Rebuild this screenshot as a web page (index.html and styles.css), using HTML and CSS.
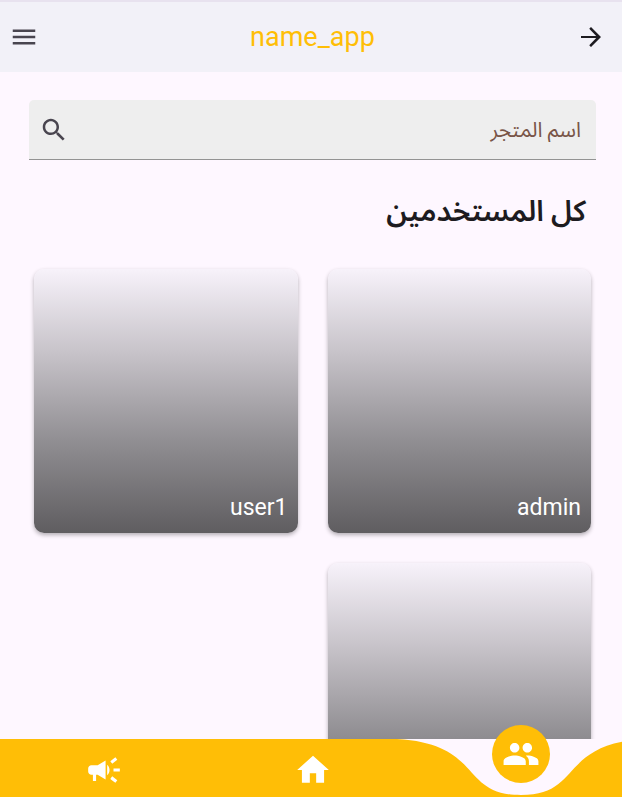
FILE: index.html
```html
<!DOCTYPE html>
<html lang="ar" dir="rtl">
<head>
<meta charset="utf-8">
<meta name="viewport" content="width=device-width, initial-scale=1">
<title>name_app</title>
<link rel="stylesheet" href="styles.css">
</head>
<body>
<header class="app-bar">
  <button class="icon-button" type="button" aria-label="رجوع">
    <svg class="icon" viewBox="0 0 24 24"><path d="M12 4l-1.41 1.41L16.17 11.2H4v1.6h12.17l-5.58 5.79L12 20l8-8z"/></svg>
  </button>
  <h1 class="app-title">name_app</h1>
  <button class="icon-button menu" type="button" aria-label="القائمة">
    <svg class="icon" viewBox="0 0 24 24"><path d="M3 18h18v-2H3v2zm0-5h18v-2H3v2zm0-7v2h18V6H3z"/></svg>
  </button>
</header>
<main class="content">
  <div class="search">
    <input class="search-input" type="search" placeholder="اسم المتجر" aria-label="اسم المتجر">
    <svg class="icon search-icon" viewBox="0 0 24 24"><path d="M15.5 14h-.79l-.28-.27C15.41 12.59 16 11.11 16 9.5 16 5.91 13.09 3 9.5 3S3 5.91 3 9.5 5.91 16 9.5 16c1.61 0 3.09-.59 4.23-1.57l.27.28v.79l5 4.99L20.49 19l-4.99-5zm-6 0C7.01 14 5 11.99 5 9.5S7.01 5 9.5 5 14 7.01 14 9.5 11.99 14 9.5 14z"/></svg>
  </div>
  <h2 class="section-title">كل المستخدمين</h2>
  <div class="grid">
    <a class="card" href="#admin">admin</a>
    <a class="card" href="#user1">user1</a>
    <a class="card" href="#user2" aria-label="user2"></a>
  </div>
</main>
<nav class="bottom-nav">
  <svg class="nav-shape" viewBox="0 0 625 58" preserveAspectRatio="none" aria-hidden="true"><path d="M0 0H397C484 5 459 56 521 56S558 5 645 0V58H0z"/></svg>
  <a class="nav-item active" href="#users" aria-label="المستخدمون">
    <svg class="nav-icon" viewBox="0 0 24 24"><path d="M16 11c1.66 0 2.99-1.34 2.99-3S17.66 5 16 5c-1.66 0-3 1.34-3 3s1.34 3 3 3zm-8 0c1.66 0 2.99-1.34 2.99-3S9.66 5 8 5C6.34 5 5 6.34 5 8s1.34 3 3 3zm0 2c-2.33 0-7 1.17-7 3.5V19h14v-2.5c0-2.33-4.67-3.5-7-3.5zm8 0c-.29 0-.62.02-.97.05 1.16.84 1.97 1.97 1.97 3.45V19h6v-2.5c0-2.33-4.67-3.5-7-3.5z"/></svg>
  </a>
  <a class="nav-item" href="#home" aria-label="الرئيسية">
    <svg class="nav-icon" viewBox="0 0 24 24"><path d="M10 20v-6h4v6h5v-8h3L12 3 2 12h3v8z"/></svg>
  </a>
  <a class="nav-item" href="#campaigns" aria-label="الإعلانات">
    <svg class="nav-icon" viewBox="0 0 24 24"><path d="M18 11v2h4v-2h-4zm-2 6.61c.96.71 2.21 1.65 3.2 2.39.4-.53.8-1.07 1.2-1.6-.99-.74-2.24-1.68-3.2-2.4-.4.54-.8 1.08-1.2 1.61zM20.4 5.6c-.4-.53-.8-1.07-1.2-1.6-.99.74-2.24 1.68-3.2 2.4.4.53.8 1.07 1.2 1.6.96-.72 2.21-1.65 3.2-2.4zM4 9c-1.1 0-2 .9-2 2v2c0 1.1.9 2 2 2h1v4h2v-4h1l5 3V6L8 9H4zm11.5 3c0-1.33-.58-2.53-1.5-3.35v6.69c.92-.81 1.5-2.01 1.5-3.34z"/></svg>
  </a>
</nav>
</body>
</html>
```

FILE: styles.css
```css
* {
  box-sizing: border-box;
}

body {
  margin: 0;
  height: 100vh;
  display: flex;
  flex-direction: column;
  overflow: hidden;
  background: #fef7ff;
  color: #1d1b20;
  font-family: Roboto, "Noto Sans Arabic", "Noto Sans", sans-serif;
}

.app-bar {
  flex: none;
  height: 72px;
  display: grid;
  grid-template-columns: 40px 1fr 40px;
  align-items: center;
  padding-inline: 6px 9px;
  border-top: 2px solid #e8e2ef;
  background: #f2f1f8;
}

.icon-button {
  display: flex;
  justify-content: flex-end;
  padding: 0;
  border: 0;
  background: none;
  color: #1d1b20;
}

.menu {
  color: #49454f;
}

.icon {
  width: 30px;
  height: 30px;
  fill: currentColor;
}

.app-title {
  margin: 0;
  font-size: 27px;
  font-weight: 400;
  line-height: 32px;
  text-align: center;
  color: #ffbe06;
}

.content {
  flex: 1;
  min-height: 0;
  overflow: hidden;
  padding: 28px 26px 0 29px;
}

.search {
  display: flex;
  align-items: center;
  height: 60px;
  padding: 0 15px 0 10px;
  border-bottom: 1px solid #939393;
  border-radius: 5px 5px 0 0;
  background: #eee;
}

.search-input {
  flex: 1;
  min-width: 0;
  padding: 0;
  border: 0;
  outline: 0;
  background: none;
  font: inherit;
  font-size: 21px;
}

.search-input::placeholder {
  color: #795548;
  opacity: 1;
}

.search-icon {
  color: #49454f;
}

.section-title {
  margin: 29px 10px 35px;
  font-size: 29px;
  font-weight: 600;
  line-height: 45px;
}

.grid {
  display: grid;
  grid-template-columns: 1fr 1fr;
  gap: 30px;
  padding: 0 5px;
}

.card {
  aspect-ratio: 1;
  display: flex;
  align-items: flex-end;
  justify-content: flex-end;
  direction: ltr;
  padding: 10px;
  border-radius: 10px;
  background: linear-gradient(#f7f2fa, #c5c1c7 33%, #8f8d91 66%, #5f5d60);
  box-shadow: 0 2px 4px rgba(0, 0, 0, 0.3);
  color: #fff;
  font-size: 23px;
  line-height: 30px;
  text-decoration: none;
}

.bottom-nav {
  position: relative;
  flex: none;
  display: grid;
  grid-template-columns: repeat(3, 1fr);
  height: 58px;
  margin-inline-start: -3px;
}

.nav-shape {
  position: absolute;
  inset: 0;
  width: 100%;
  height: 100%;
  fill: #ffbe06;
}

.nav-item {
  position: relative;
  display: flex;
  align-items: center;
  justify-content: center;
  padding-top: 4px;
  color: #fff;
}

.nav-icon {
  width: 38px;
  height: 38px;
  fill: currentColor;
}

.nav-item.active {
  top: -14px;
  justify-self: center;
  width: 58px;
  height: 58px;
  padding: 0;
  border-radius: 50%;
  background: #ffbe06;
}
```
